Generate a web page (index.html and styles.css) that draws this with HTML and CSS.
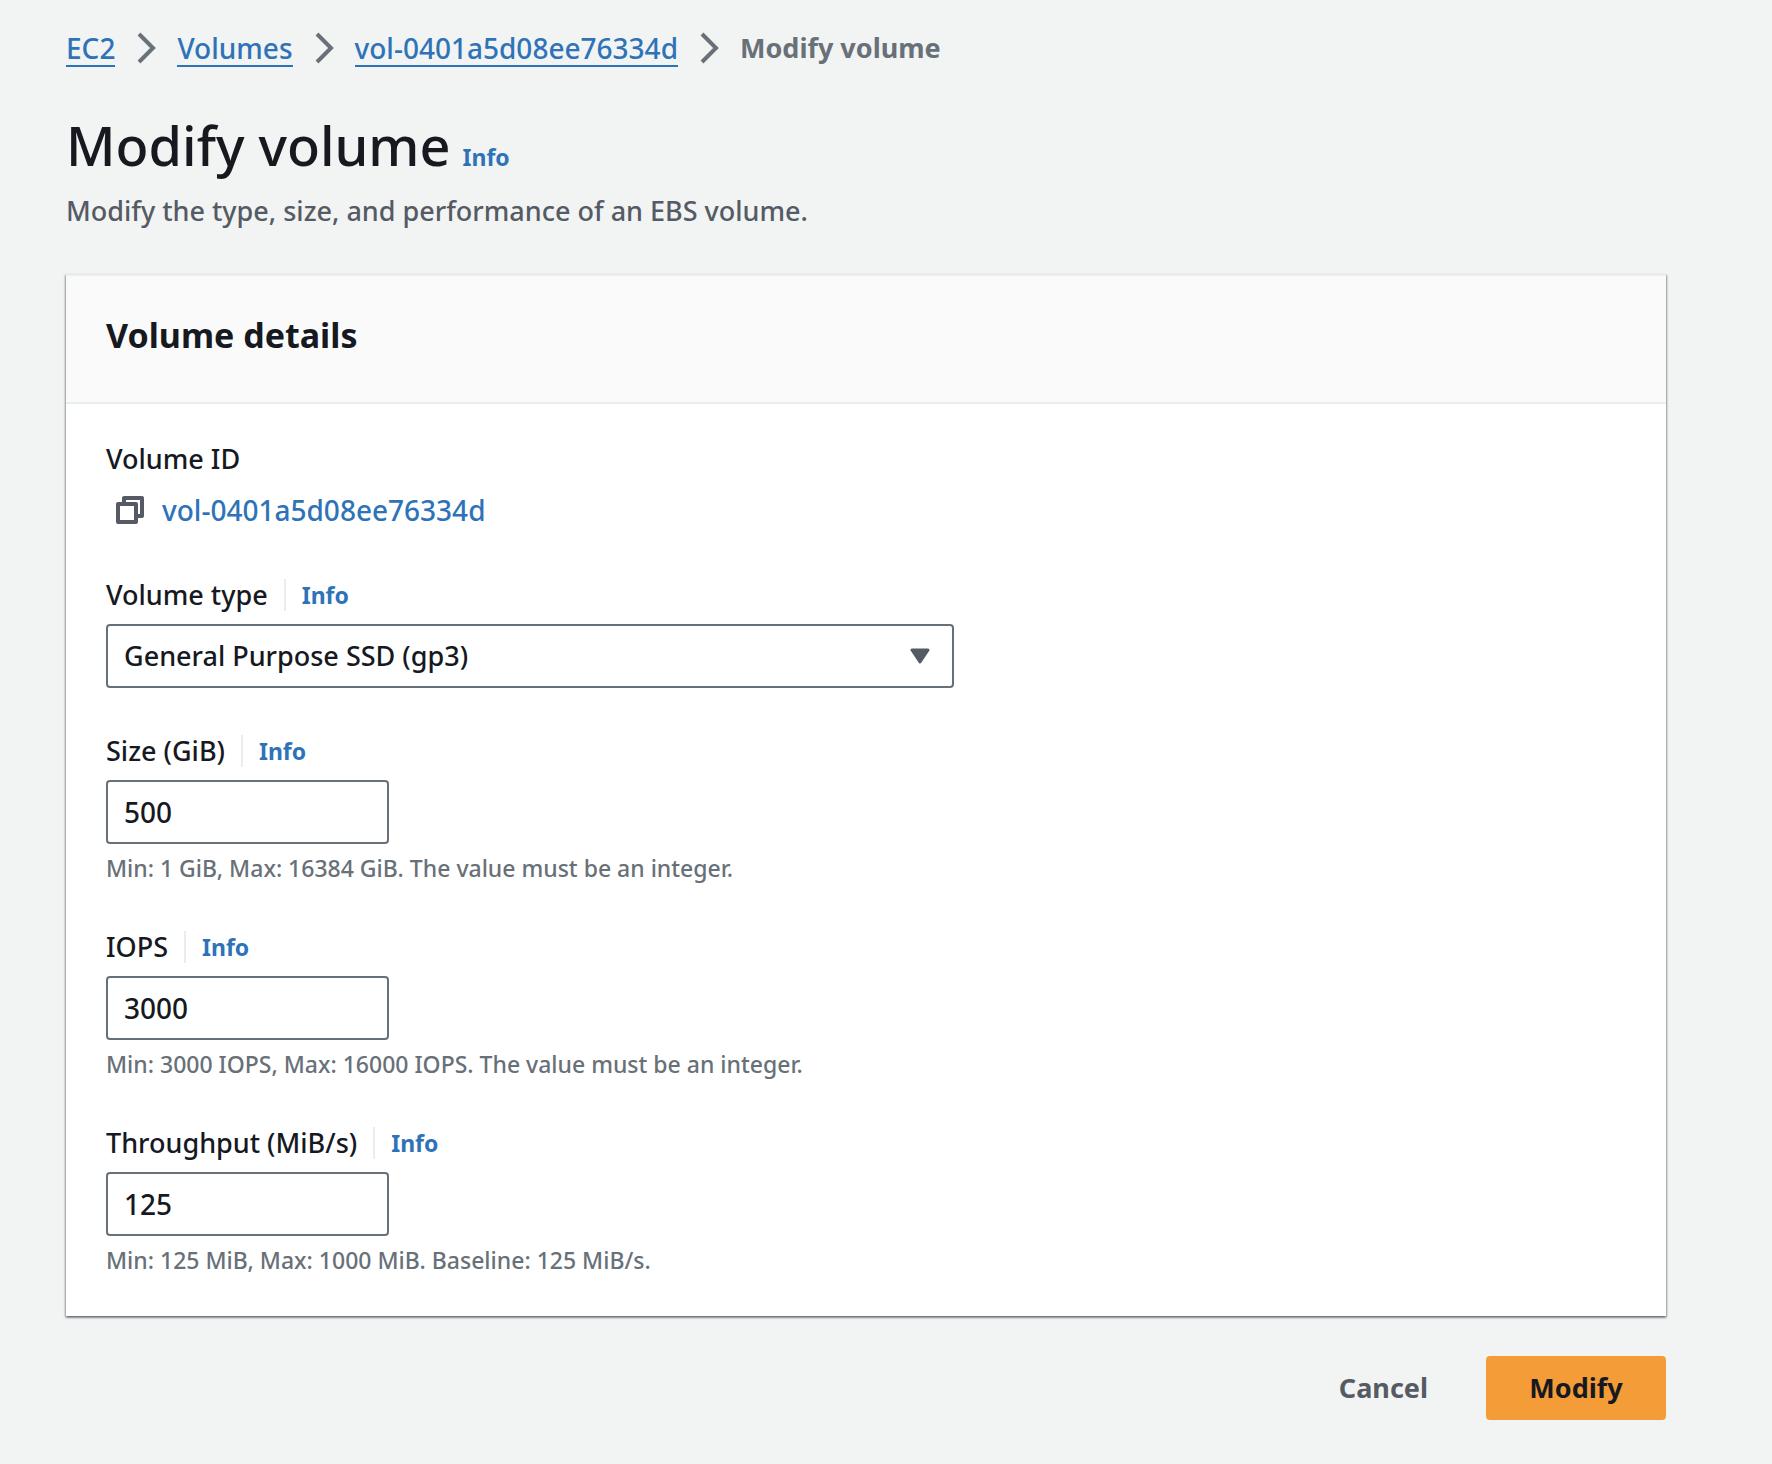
FILE: index.html
```html
<!DOCTYPE html>
<html lang="en">
<head>
<meta charset="utf-8">
<meta name="viewport" content="width=device-width, initial-scale=1">
<title>Modify volume</title>
<link rel="stylesheet" href="styles.css">
</head>
<body>
<main class="page">
  <nav aria-label="Breadcrumbs">
    <ol class="breadcrumbs">
      <li class="crumb"><a class="crumb-link" href="#">EC2</a><svg class="chevron" viewBox="0 0 20 32" aria-hidden="true"><path d="M3 2 17 16 3 30"/></svg></li>
      <li class="crumb"><a class="crumb-link" href="#">Volumes</a><svg class="chevron" viewBox="0 0 20 32" aria-hidden="true"><path d="M3 2 17 16 3 30"/></svg></li>
      <li class="crumb"><a class="crumb-link" href="#">vol-0401a5d08ee76334d</a><svg class="chevron" viewBox="0 0 20 32" aria-hidden="true"><path d="M3 2 17 16 3 30"/></svg></li>
      <li class="crumb crumb-current" aria-current="page">Modify volume</li>
    </ol>
  </nav>

  <header class="page-header">
    <div class="title-row">
      <h1 class="page-title">Modify volume</h1>
      <a class="info-link" href="#">Info</a>
    </div>
    <p class="page-description">Modify the type, size, and performance of an EBS volume.</p>
  </header>

  <form class="form">
    <section class="card">
      <div class="card-header">
        <h2 class="card-title">Volume details</h2>
      </div>
      <div class="card-body">
        <div class="field">
          <div class="label-row"><span class="label">Volume ID</span></div>
          <div class="volume-id">
            <button class="copy-button" type="button" aria-label="Copy volume ID">
              <svg class="copy-icon" viewBox="0 0 28 28" aria-hidden="true"><path d="M8 8V2H26V20H20M2 8H20V26H2Z"/></svg>
            </button>
            <a class="volume-link" href="#">vol-0401a5d08ee76334d</a>
          </div>
        </div>

        <div class="field">
          <div class="label-row">
            <label class="label" for="type">Volume type</label>
            <a class="info-link info-divided" href="#">Info</a>
          </div>
          <div class="select-wrap">
            <select class="control" id="type"><option>General Purpose SSD (gp3)</option></select>
            <svg class="caret" viewBox="0 0 20 16" aria-hidden="true"><path d="M2 2H18L10 14Z"/></svg>
          </div>
        </div>

        <div class="field">
          <div class="label-row">
            <label class="label" for="size">Size (GiB)</label>
            <a class="info-link info-divided" href="#">Info</a>
          </div>
          <input class="control control-short" id="size" type="text" inputmode="numeric" value="500" aria-describedby="size-hint">
          <p class="hint" id="size-hint">Min: 1 GiB, Max: 16384 GiB. The value must be an integer.</p>
        </div>

        <div class="field">
          <div class="label-row">
            <label class="label" for="iops">IOPS</label>
            <a class="info-link info-divided" href="#">Info</a>
          </div>
          <input class="control control-short" id="iops" type="text" inputmode="numeric" value="3000" aria-describedby="iops-hint">
          <p class="hint" id="iops-hint">Min: 3000 IOPS, Max: 16000 IOPS. The value must be an integer.</p>
        </div>

        <div class="field">
          <div class="label-row">
            <label class="label" for="throughput">Throughput (MiB/s)</label>
            <a class="info-link info-divided" href="#">Info</a>
          </div>
          <input class="control control-short" id="throughput" type="text" inputmode="numeric" value="125" aria-describedby="throughput-hint">
          <p class="hint" id="throughput-hint">Min: 125 MiB, Max: 1000 MiB. Baseline: 125 MiB/s.</p>
        </div>
      </div>
    </section>

    <div class="actions">
      <button class="button button-link" type="button">Cancel</button>
      <button class="button button-primary" type="submit">Modify</button>
    </div>
  </form>
</main>
</body>
</html>
```
FILE: styles.css
```css
* {
  box-sizing: border-box;
}

body {
  margin: 0;
  background: #f2f3f3;
  color: #16191f;
  font-family: "Noto Sans", "Open Sans", sans-serif;
  font-size: 27px;
  font-weight: 500;
  line-height: 44px;
}

h1,
h2,
p,
ol {
  margin: 0;
  padding: 0;
}

a {
  color: #2e73b8;
  text-decoration: none;
}

.page {
  padding: 26px 106px 40px 66px;
}

/* Breadcrumbs */
.breadcrumbs {
  display: flex;
  flex-wrap: wrap;
  list-style: none;
}

.crumb {
  display: flex;
  align-items: center;
}

.crumb-link {
  align-self: flex-start;
  height: 41px;
  border-bottom: 2px solid #2e73b8;
  font-size: 28px;
}

.crumb-current {
  color: #687078;
  font-weight: 700;
}

.chevron {
  width: 20px;
  height: 32px;
  margin: 0 21px;
  fill: none;
  stroke: #687078;
  stroke-width: 4;
}

/* Page heading */
.page-header {
  margin-top: 39px;
}

.title-row {
  display: flex;
  align-items: baseline;
  gap: 12px;
}

.page-title {
  font-size: 54px;
  font-weight: 500;
  line-height: 72px;
}

.page-description {
  margin-top: 8px;
  color: #545b64;
}

.info-link {
  font-size: 23px;
  font-weight: 700;
}

.info-divided {
  padding-left: 16px;
  border-left: 2px solid #eaeded;
  line-height: 32px;
}

/* Card */
.card {
  margin-top: 41px;
  border-top: 2px solid #eaeded;
  background: #fff;
  box-shadow: 0 2px 2px 0 rgba(0, 28, 36, 0.3), 1px 1px 2px 0 rgba(0, 28, 36, 0.3), -1px 1px 2px 0 rgba(0, 28, 36, 0.3);
}

.card-header {
  padding: 37px 40px 45px;
  border-bottom: 2px solid #eaeded;
  background: #fafafa;
}

.card-title {
  font-size: 34px;
  font-weight: 700;
  line-height: 44px;
}

.card-body {
  display: flex;
  flex-direction: column;
  gap: 40px;
  padding: 32px 40px 40px;
}

.label-row {
  display: flex;
  align-items: center;
  gap: 16px;
  height: 46px;
  margin-bottom: 6px;
}

.volume-id {
  display: flex;
  align-items: center;
  gap: 18px;
  height: 44px;
  padding-left: 10px;
}

.volume-link {
  font-size: 28px;
}

.copy-button {
  display: flex;
  padding: 0;
  border: 0;
  background: none;
}

.copy-icon {
  width: 28px;
  height: 28px;
  fill: none;
  stroke: #545b64;
  stroke-width: 4;
  stroke-linejoin: round;
}

.control {
  display: block;
  width: 100%;
  height: 64px;
  padding: 0 16px;
  border: 2px solid #687078;
  border-radius: 4px;
  background: #fff;
  color: #16191f;
  font: inherit;
  appearance: none;
}

.control-short {
  max-width: 283px;
  font-size: 28px;
}

.select-wrap {
  position: relative;
  max-width: 848px;
}

.caret {
  position: absolute;
  top: 24px;
  right: 24px;
  width: 20px;
  height: 16px;
  fill: #545b64;
  stroke: #545b64;
  stroke-width: 3;
  stroke-linejoin: round;
  pointer-events: none;
}

.hint {
  margin-top: 8px;
  color: #687078;
  font-size: 23px;
  line-height: 32px;
}

/* Actions */
.actions {
  display: flex;
  justify-content: flex-end;
  gap: 16px;
  margin-top: 40px;
}

.button {
  height: 64px;
  padding: 0 42px;
  border: 0;
  border-radius: 4px;
  font: inherit;
  font-weight: 700;
}

.button-link {
  background: none;
  color: #545b64;
}

.button-primary {
  min-width: 180px;
  background: #f49d38;
  color: #16191f;
}
```
